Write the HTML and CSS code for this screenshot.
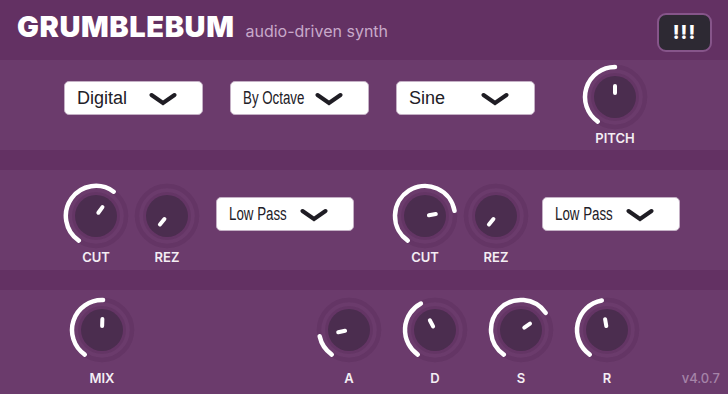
FILE: index.html
```html
<!DOCTYPE html>
<html lang="en">
<head>
  <meta charset="UTF-8">
  <title>Grumblebum</title>
  <link rel="stylesheet" href="styles.css">
</head>
<body>

  <div class="header">
    <div class="brand">
      <span class="title">GRUMBLEBUM</span>
      <span class="subtitle">audio-driven synth</span>
    </div>
    <button class="alert-btn">!!!</button>
  </div>

  <!-- oscillator -->
  <div class="panel row-osc">
    <div class="select"><span>Digital</span><svg class="chevron" width="28" height="14" viewBox="0 0 28 14"><polyline points="2.5,3 14,11 25.5,3"/></svg></div>
    <div class="select"><span class="squeeze">By Octave</span><svg class="chevron" width="28" height="14" viewBox="0 0 28 14"><polyline points="2.5,3 14,11 25.5,3"/></svg></div>
    <div class="select"><span>Sine</span><svg class="chevron" width="28" height="14" viewBox="0 0 28 14"><polyline points="2.5,3 14,11 25.5,3"/></svg></div>
    <div class="knob-group pitch">
      <div class="knob" data-angle="0"></div>
      <div class="label">PITCH</div>
    </div>
  </div>

  <!-- filters -->
  <div class="panel row-filter">
    <div class="knob-group">
      <div class="knob" data-angle="36"></div>
      <div class="label">CUT</div>
    </div>
    <div class="knob-group rez">
      <div class="knob" data-angle="-140"></div>
      <div class="label">REZ</div>
    </div>
    <div class="select filter-select"><span class="squeeze">Low Pass</span><svg class="chevron" width="28" height="14" viewBox="0 0 28 14"><polyline points="2.5,3 14,11 25.5,3"/></svg></div>

    <div class="knob-group cut-2">
      <div class="knob" data-angle="80"></div>
      <div class="label">CUT</div>
    </div>
    <div class="knob-group rez">
      <div class="knob" data-angle="-140"></div>
      <div class="label">REZ</div>
    </div>
    <div class="select filter-select filter-2"><span class="squeeze">Low Pass</span><svg class="chevron" width="28" height="14" viewBox="0 0 28 14"><polyline points="2.5,3 14,11 25.5,3"/></svg></div>
  </div>

  <!-- amp -->
  <div class="panel row-amp">
    <div class="knob-group">
      <div class="knob" data-angle="2"></div>
      <div class="label">MIX</div>
    </div>
    <div class="knob-group env-a">
      <div class="knob" data-angle="-102"></div>
      <div class="label">A</div>
    </div>
    <div class="knob-group env">
      <div class="knob" data-angle="-28"></div>
      <div class="label">D</div>
    </div>
    <div class="knob-group env">
      <div class="knob" data-angle="55"></div>
      <div class="label">S</div>
    </div>
    <div class="knob-group env">
      <div class="knob" data-angle="-10"></div>
      <div class="label">R</div>
    </div>
    <div class="version">v4.0.7</div>
  </div>

  <script>
    var START = -145;

    function polar(r, a) {
      var rad = a * Math.PI / 180;
      return [(34 + r * Math.sin(rad)).toFixed(2), (34 - r * Math.cos(rad)).toFixed(2)];
    }

    document.querySelectorAll(".knob").forEach(function (knob) {
      var angle = parseFloat(knob.dataset.angle);
      var svg = '<svg width="68" height="68" viewBox="0 0 68 68">' +
        '<circle class="knob-track" cx="34" cy="34" r="30"/>' +
        '<circle class="knob-rim" cx="34" cy="34" r="24"/>' +
        '<circle class="knob-body" cx="34" cy="34" r="21"/>';

      // arc only when the value is clearly above the minimum
      if (angle > START + 10) {
        var p0 = polar(30, START), p1 = polar(30, angle);
        var large = angle - START > 180 ? 1 : 0;
        svg += '<path class="knob-arc" d="M' + p0 + ' A30 30 0 ' + large + ' 1 ' + p1 + '"/>';
      }

      var a = polar(4, angle), b = polar(11, angle);
      svg += '<line class="knob-pointer" x1="' + a[0] + '" y1="' + a[1] + '" x2="' + b[0] + '" y2="' + b[1] + '"/>';
      knob.innerHTML = svg + '</svg>';
    });
  </script>

</body>
</html>
```

FILE: styles.css
```css
* {
  margin: 0;
  padding: 0;
  box-sizing: border-box;
}

body {
  width: 728px;
  height: 394px;
  overflow: hidden;
  background: #633163;
  font-family: Inter, "Liberation Sans", sans-serif;
}

.header {
  height: 60px;
  display: flex;
  justify-content: space-between;
  align-items: flex-start;
  padding: 10px 16px 0 17px;
}

.brand {
  display: flex;
  align-items: baseline;
  gap: 11px;
}

.title {
  font-size: 29px;
  font-weight: 900;
  line-height: 34px;
  letter-spacing: 0.6px;
  color: #fff;
}

.subtitle {
  font-size: 16px;
  color: #c8a9ca;
}

.alert-btn {
  width: 55px;
  height: 39px;
  margin-top: 3px;
  background: #2d2933;
  border: 2px solid #86558a;
  border-radius: 9px;
  color: #fff;
  font-family: Inter, sans-serif;
  font-size: 19px;
  font-weight: 800;
  letter-spacing: 1px;
}

.panel {
  display: flex;
  align-items: flex-start;
  background: #6b3b6c;
}

.row-osc {
  height: 90px;
  padding: 3px 0 0 64px;
  gap: 27px;
}

.row-filter {
  height: 100px;
  margin-top: 20px;
  padding: 12px 0 0 62px;
}

.row-amp {
  height: 104px;
  margin-top: 20px;
  padding: 6px 0 0 68px;
}

/* dropdowns */
.select {
  width: 139px;
  height: 34px;
  margin-top: 18px;
  display: flex;
  align-items: center;
  justify-content: space-between;
  padding: 0 25px 0 12px;
  background: #fff;
  border: 1px solid #c4b0c5;
  border-radius: 5px;
  font-family: "Liberation Sans", Arial, sans-serif;
  font-size: 18px;
  color: #222027;
}

.squeeze {
  display: inline-block;
  width: 60px;
  white-space: nowrap;
  transform: scaleX(0.74);
  transform-origin: left center;
}

.chevron {
  flex-shrink: 0;
  margin-top: 2px;
}

.chevron polyline {
  fill: none;
  stroke: #1f1d24;
  stroke-width: 4;
  stroke-linecap: round;
}

.filter-select {
  width: 138px;
  margin-top: 15px;
  margin-left: 15px;
}

.filter-2 {
  margin-left: 12px;
}

/* knobs */
.knob-group {
  width: 68px;
  display: flex;
  flex-direction: column;
  align-items: center;
}

.knob {
  width: 68px;
  height: 68px;
}

.knob svg {
  display: block;
}

.knob-track {
  fill: none;
  stroke: rgba(40, 0, 40, 0.1);
  stroke-width: 4.5;
}

.knob-rim {
  fill: rgba(30, 0, 30, 0.09);
}

.knob-body {
  fill: #4b2d4f;
}

.knob-arc {
  fill: none;
  stroke: #fff;
  stroke-width: 4.5;
  stroke-linecap: round;
}

.knob-pointer {
  stroke: #fff;
  stroke-width: 4;
  stroke-linecap: round;
}

.label {
  font-size: 13px;
  font-weight: 600;
  line-height: 14px;
  color: #f4eef4;
  text-align: center;
}

.row-amp .label {
  margin-top: 7px;
}

.pitch {
  margin-left: 19px;
}

.rez {
  margin-left: 3px;
}

.cut-2 {
  margin-left: 37px;
}

.env-a {
  margin-left: 179px;
}

.env {
  margin-left: 18px;
}

.version {
  margin: 75px 8px 0 auto;
  font-size: 13px;
  font-weight: 500;
  line-height: 14px;
  color: #a584a8;
}
```
